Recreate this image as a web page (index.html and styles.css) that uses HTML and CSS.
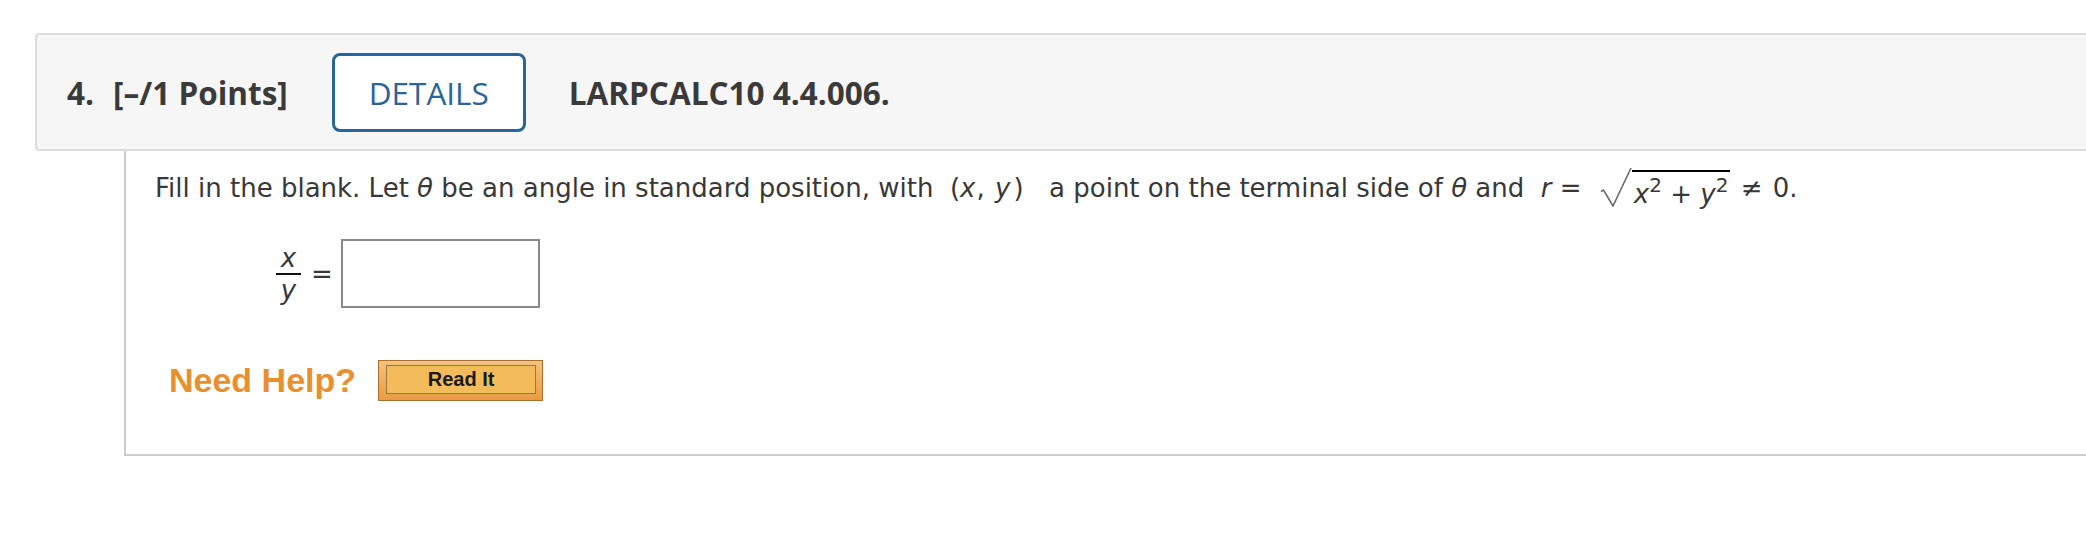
FILE: index.html
```html
<!DOCTYPE html>
<html lang="en">
<head>
<meta charset="utf-8">
<title>LARPCALC10 4.4.006</title>
<link rel="stylesheet" href="styles.css">
</head>
<body>
<div class="page">
  <div class="qhead">
    <span class="qnum">4.</span>
    <span class="qpts">[–/1 Points]</span>
    <button class="details" type="button">DETAILS</button>
    <span class="qid">LARPCALC10 4.4.006.</span>
  </div>
  <div class="qbody">
    <p class="stem">Fill in the blank. Let <i>θ</i> be an angle in standard position, with&nbsp; <span class="pt">(<i class="vx">x</i>, <i class="vy">y</i>)</span>&nbsp; a point on the terminal side of <i>θ</i> and&nbsp; <i>r</i> = <span class="sqrt"><svg class="radical" width="32" height="40" viewBox="0 0 32 40"><path d="M1 24.5 L3.5 23 L13 39 L31 1" fill="none" stroke="#6a6a6a" stroke-width="1.6" stroke-linejoin="miter"/></svg><span class="rad"><i>x</i><sup>2</sup> + <i>y</i><sup>2</sup></span></span> <span class="ne">≠</span> 0.</p>
    <div class="answer">
      <span class="frac"><i class="num">x</i><span class="bar"></span><i class="den">y</i></span>
      <span class="eq">=</span>
      <input class="blank" type="text" aria-label="answer">
    </div>
    <div class="help">
      <span class="needhelp">Need Help?</span>
      <button class="readit" type="button"><span class="readit-inner">Read It</span></button>
    </div>
  </div>
</div>
</body>
</html>
```

FILE: styles.css
```css
html, body {
  margin: 0;
  padding: 0;
  background: #ffffff;
}

.page {
  padding-top: 33px;
  overflow: hidden;
  width: 2086px;
}

.qhead {
  margin-left: 35px;
  margin-right: -20px;
  height: 114px;
  background: #f6f6f6;
  border: 2px solid #dddddd;
  border-radius: 4px 0 0 4px;
  display: flex;
  align-items: center;
  font-family: "Open Sans", "DejaVu Sans", sans-serif;
  font-weight: 700;
  font-size: 31.5px;
  color: #3a3a3a;
}

.qnum {
  margin-left: 30px;
}

.qpts {
  margin-left: 19px;
}

.details {
  margin-left: 44px;
  width: 194px;
  height: 79px;
  box-sizing: border-box;
  border: 3px solid #2b6496;
  border-radius: 8px;
  background: #ffffff;
  color: #2b6496;
  font-family: "Open Sans", "DejaVu Sans", sans-serif;
  font-size: 31.5px;
  font-weight: 400;
  padding: 0;
  cursor: pointer;
}

.qid {
  margin-left: 43px;
}

.qbody {
  margin-left: 124px;
  margin-right: -20px;
  border-left: 2px solid #cccccc;
  border-bottom: 2px solid #cccccc;
  padding: 22px 0 53px 29px;
  font-family: "DejaVu Sans", Verdana, sans-serif;
  font-size: 26px;
  color: #383838;
}

.stem {
  margin: 0;
  line-height: 31px;
  white-space: nowrap;
}

.stem i, .frac i {
  font-style: italic;
}

.pt {
  margin-right: 9px;
}

.pt .vx {
  margin-right: 1px;
}

.pt .vy {
  margin-left: 2px;
  margin-right: 3px;
}

.sqrt {
  display: inline-block;
  margin: -20px 0 -20px 10px;
  white-space: nowrap;
}

.radical {
  display: inline-block;
  vertical-align: -10px;
}

.rad {
  display: inline-block;
  vertical-align: -6px;
  border-top: 2px solid #000000;
  padding: 7px 2px 0 2px;
  line-height: 31px;
}

.rad sup {
  font-size: 20px;
  line-height: 0;
  vertical-align: 11px;
}

.ne {
  margin-left: 2px;
  margin-right: 2px;
}

.answer {
  display: flex;
  align-items: center;
  margin-top: 35px;
  margin-left: 121px;
}

.frac {
  display: inline-flex;
  flex-direction: column;
  align-items: center;
  width: 25px;
  line-height: 26px;
}

.frac .bar {
  display: block;
  width: 25px;
  height: 2px;
  background: #111111;
  margin: 2px 0 2px 0;
}

.eq {
  margin-left: 10px;
}

.blank {
  margin-left: 8px;
  width: 199px;
  height: 69px;
  box-sizing: border-box;
  border: 2px solid #888888;
  border-radius: 0;
  background: #ffffff;
  padding: 0;
}

.help {
  display: flex;
  align-items: center;
  margin-top: 52px;
  margin-left: 14px;
}

.needhelp {
  font-family: "Liberation Sans", Arial, sans-serif;
  font-weight: 700;
  font-size: 34px;
  color: #e8902e;
}

.readit {
  margin-left: 22px;
  width: 165px;
  height: 41px;
  box-sizing: border-box;
  border: 1px solid #a86f2e;
  background: linear-gradient(#f6c27a, #ec9a3e);
  padding: 4px 6px 6px 7px;
  display: flex;
  cursor: pointer;
}

.readit-inner {
  flex: 1;
  display: flex;
  align-items: center;
  justify-content: center;
  border: 1px solid #9a7842;
  background: #f3bb5a;
  font-family: "Liberation Sans", Arial, sans-serif;
  font-weight: 700;
  font-size: 20px;
  color: #1a1a1a;
}
```
